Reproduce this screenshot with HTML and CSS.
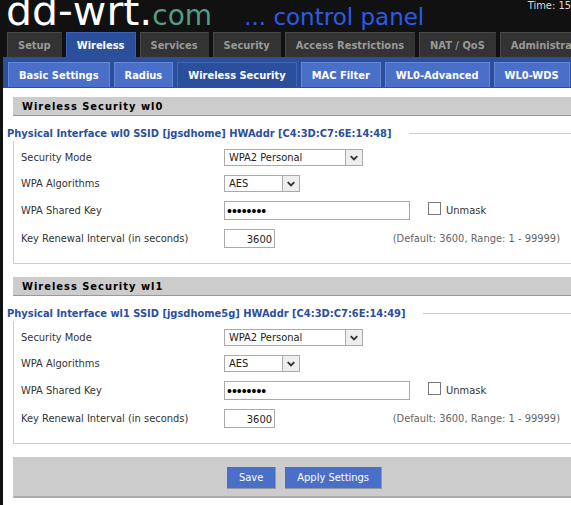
FILE: index.html
```html
<!DOCTYPE html>
<html lang="en">
    <head>
        <meta charset="utf-8" />
        <meta name="viewport" content="width=device-width, initial-scale=1" />
        <title>DD-WRT - Wireless Security</title>
        <link rel="stylesheet" href="styles.css">
    </head>
    <body>
        <div id="wrapper">
            <header class="header">
                <h1 class="logo">dd-wrt.<span class="logo-com">com</span></h1>
                <span class="control">... control panel</span>
                <span class="info">Time: 15</span>
            </header>

            <nav class="menu-main">
                <a href="#">Setup</a>
                <a href="#" class="current">Wireless</a>
                <a href="#">Services</a>
                <a href="#">Security</a>
                <a href="#">Access Restrictions</a>
                <a href="#">NAT / QoS</a>
                <a href="#">Administration</a>
            </nav>
            <nav class="menu-sub">
                <a href="#">Basic Settings</a>
                <a href="#">Radius</a>
                <a href="#" class="current">Wireless Security</a>
                <a href="#">MAC Filter</a>
                <a href="#">WL0-Advanced</a>
                <a href="#">WL0-WDS</a>
            </nav>

            <form class="contents">
                <h2>Wireless Security wl0</h2>
                <fieldset>
                    <legend>Physical Interface wl0 SSID [jgsdhome] HWAddr [C4:3D:C7:6E:14:48]</legend>
                    <div class="setting">
                        <label class="label" for="wl0_mode">Security Mode</label>
                        <span class="select mode">
                            <select id="wl0_mode"><option>WPA2 Personal</option></select>
                            <svg viewBox="0 0 17 15"><path d="M5 6l3.500 3.500L12 6" /></svg>
                        </span>
                    </div>
                    <div class="setting">
                        <label class="label" for="wl0_crypto">WPA Algorithms</label>
                        <span class="select crypto">
                            <select id="wl0_crypto"><option>AES</option></select>
                            <svg viewBox="0 0 17 15"><path d="M5 6l3.500 3.500L12 6" /></svg>
                        </span>
                    </div>
                    <div class="setting">
                        <label class="label" for="wl0_psk">WPA Shared Key</label>
                        <input type="password" id="wl0_psk" class="key" value="12345678" />
                        <input type="checkbox" id="wl0_unmask" />
                        <label for="wl0_unmask">Unmask</label>
                    </div>
                    <div class="setting">
                        <label class="label" for="wl0_rekey">Key Renewal Interval (in seconds)</label>
                        <input type="text" id="wl0_rekey" class="num" value="3600" />
                        <span class="default">(Default: 3600, Range: 1 - 99999)</span>
                    </div>
                </fieldset>

                <h2>Wireless Security wl1</h2>
                <fieldset>
                    <legend>Physical Interface wl1 SSID [jgsdhome5g] HWAddr [C4:3D:C7:6E:14:49]</legend>
                    <div class="setting">
                        <label class="label" for="wl1_mode">Security Mode</label>
                        <span class="select mode">
                            <select id="wl1_mode"><option>WPA2 Personal</option></select>
                            <svg viewBox="0 0 17 15"><path d="M5 6l3.500 3.500L12 6" /></svg>
                        </span>
                    </div>
                    <div class="setting">
                        <label class="label" for="wl1_crypto">WPA Algorithms</label>
                        <span class="select crypto">
                            <select id="wl1_crypto"><option>AES</option></select>
                            <svg viewBox="0 0 17 15"><path d="M5 6l3.500 3.500L12 6" /></svg>
                        </span>
                    </div>
                    <div class="setting">
                        <label class="label" for="wl1_psk">WPA Shared Key</label>
                        <input type="password" id="wl1_psk" class="key" value="12345678" />
                        <input type="checkbox" id="wl1_unmask" />
                        <label for="wl1_unmask">Unmask</label>
                    </div>
                    <div class="setting">
                        <label class="label" for="wl1_rekey">Key Renewal Interval (in seconds)</label>
                        <input type="text" id="wl1_rekey" class="num" value="3600" />
                        <span class="default">(Default: 3600, Range: 1 - 99999)</span>
                    </div>
                </fieldset>

                <div class="submit-footer">
                    <button type="button">Save</button>
                    <button type="button">Apply Settings</button>
                </div>
            </form>
        </div>
    </body>
</html>
```
FILE: styles.css
```css
* {
    box-sizing: border-box;
}

body {
    margin: 0;
    background: #000;
    color: #333;
    font: 11px/15px Tahoma, "DejaVu Sans Condensed", "DejaVu Sans", sans-serif;
}

#wrapper {
    overflow: hidden;
    min-height: 100vh;
    padding-left: 3px;
    display: flex;
    flex-direction: column;
    background: #111;
}

/* header */
.header {
    display: flex;
    align-items: baseline;
    height: 32px;
    padding-left: 3px;
    white-space: nowrap;
}

.logo {
    margin: 0;
    color: #fff;
    font: 41px/22px "DejaVu Sans", sans-serif;
}

.logo-com {
    color: #559c86;
    font-size: 28px;
}

.control {
    margin-left: 32px;
    color: #2b5be8;
    font: 23px/22px "DejaVu Sans", sans-serif;
}

.info {
    align-self: flex-start;
    margin: -2px 0 0 auto;
    color: #ddd;
}

/* menus */
.menu-main,
.menu-sub {
    display: flex;
    align-items: flex-end;
    gap: 4px;
    white-space: nowrap;
}

.menu-main {
    padding-left: 4px;
}

.menu-main a,
.menu-sub a {
    padding: 5px 10px 4px;
    border: 1px solid;
    border-bottom: 0;
    font-weight: bold;
    text-decoration: none;
}

.menu-main a {
    border-color: #484848 #333 #333 #484848;
    background: #333;
    color: #999;
}

.menu-main .current {
    border-color: #3a60b8;
    background: #2c4f9c;
    color: #fff;
}

.menu-sub {
    padding: 5px 0 1px 5px;
    background: #2c4f9c;
}

.menu-sub a {
    border-color: #6688d8;
    background: #4a6fc8;
    color: #fff;
}

.menu-sub .current {
    border-color: #3f65bd;
    background: #2c4f9c;
}

/* contents */
.contents {
    flex: 1;
    padding: 9px 0 8px 10px;
    background: #fff;
}

h2 {
    margin: 0 0 10px;
    padding: 2px 9px 1px;
    border-bottom: 1px solid #999;
    background: #ccc;
    color: #000;
    font-size: 11px;
    line-height: 15px;
    letter-spacing: 1px;
}

fieldset {
    min-width: 0;
    margin: 0 0 13px;
    padding: 8px 11px 15px 7px;
    border: 1px solid #ccc;
    border-right: 0;
}

legend {
    margin-left: -14px;
    padding: 0 17px 0 0;
    background: #fff;
    color: #2c4f9c;
    font-weight: bold;
    white-space: nowrap;
}

.setting {
    display: flex;
    align-items: center;
    white-space: nowrap;
}

.setting + .setting {
    margin-top: 9px;
}

.label {
    flex: 0 0 203px;
}

select,
input,
button {
    margin: 0;
    border: 1px solid #aaa;
    border-radius: 0;
    background: #fff;
    color: #222;
    font: inherit;
}

.select {
    position: relative;
    height: 17px;
}

.select select {
    width: 100%;
    height: 17px;
    padding: 0 18px 0 4px;
    appearance: none;
    line-height: 15px;
}

.select svg {
    position: absolute;
    top: 0;
    right: 0;
    width: 18px;
    height: 17px;
    border: 1px solid #aaa;
    background: #eee;
    fill: none;
    stroke: #333;
    stroke-width: 2;
    pointer-events: none;
}

.mode {
    width: 139px;
}

.crypto {
    width: 76px;
}

.key,
.num {
    height: 19px;
    padding: 1px 2px 0;
}

.key {
    width: 186px;
    color: #000;
    font-family: "Liberation Sans", sans-serif;
    font-size: 14px;
}

.num {
    width: 51px;
    text-align: right;
}

input[type="checkbox"] {
    width: 13px;
    height: 13px;
    margin: 0 5px 4px 18px;
    border-color: #777;
    appearance: none;
}

.default {
    margin-left: auto;
    color: #666;
}

.submit-footer {
    display: flex;
    gap: 9px;
    padding: 9px 0 7px 213px;
    border: 1px solid #ccc;
    border-bottom: 2px solid #aaa;
    border-right: 0;
    background: #ccc;
}

.submit-footer button {
    height: 22px;
    padding: 0 12px;
    border: 0;
    border-right: 1px solid #999;
    border-bottom: 1px solid #999;
    background: #4a6fc8;
    color: #fff;
}
```
